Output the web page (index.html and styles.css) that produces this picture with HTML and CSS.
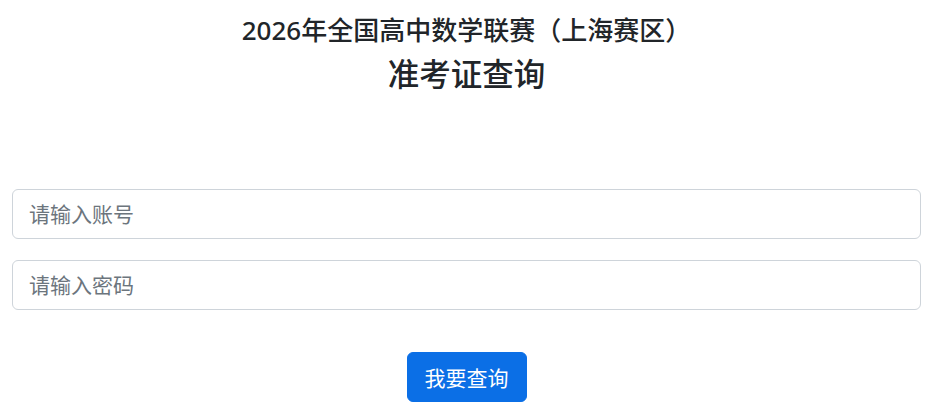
FILE: index.html
```html
<!DOCTYPE html>
<html lang="zh">
<head>
<meta charset="utf-8">
<title>准考证查询</title>
<link rel="stylesheet" href="styles.css">
</head>
<body>
<div class="page">
  <header class="head">
    <h1 class="title">2026年全国高中数学联赛（上海赛区）</h1>
    <h2 class="subtitle">准考证查询</h2>
  </header>
  <form class="form">
    <input class="field" type="text" placeholder="请输入账号">
    <input class="field" type="password" placeholder="请输入密码">
    <div class="actions">
      <button class="btn" type="button">我要查询</button>
    </div>
  </form>
</div>
</body>
</html>
```
FILE: styles.css
```css
* { box-sizing: border-box; }
html, body { margin: 0; padding: 0; background: #fff; }
body {
  font-family: "Noto Sans", "Noto Sans CJK SC", sans-serif;
  color: #212529;
}
.page {
  padding: 0 16px 0 12px;
}
.head {
  display: flex;
  flex-direction: column;
  align-items: center;
  padding-top: 10px;
}
.title {
  margin: 0;
  font-size: 26px;
  font-weight: 500;
  line-height: 40px;
}
.subtitle {
  margin: 0;
  font-size: 31.5px;
  font-weight: 500;
  line-height: 48px;
}
.form {
  display: flex;
  flex-direction: column;
  gap: 21px;
  margin-top: 91px;
}
.field {
  display: block;
  width: 100%;
  height: 50px;
  padding: 0 16px;
  font-family: inherit;
  font-size: 21px;
  color: #212529;
  border: 1px solid #ced4da;
  border-radius: 6px;
  background: #fff;
}
.field::placeholder { color: #6c757d; }
.actions {
  display: flex;
  justify-content: center;
  margin-top: 21px;
}
.btn {
  height: 50px;
  padding: 0 17px;
  font-family: inherit;
  font-size: 21px;
  color: #fff;
  background: #0b6fe6;
  border: 1px solid #0b6fe6;
  border-radius: 6px;
}
```
